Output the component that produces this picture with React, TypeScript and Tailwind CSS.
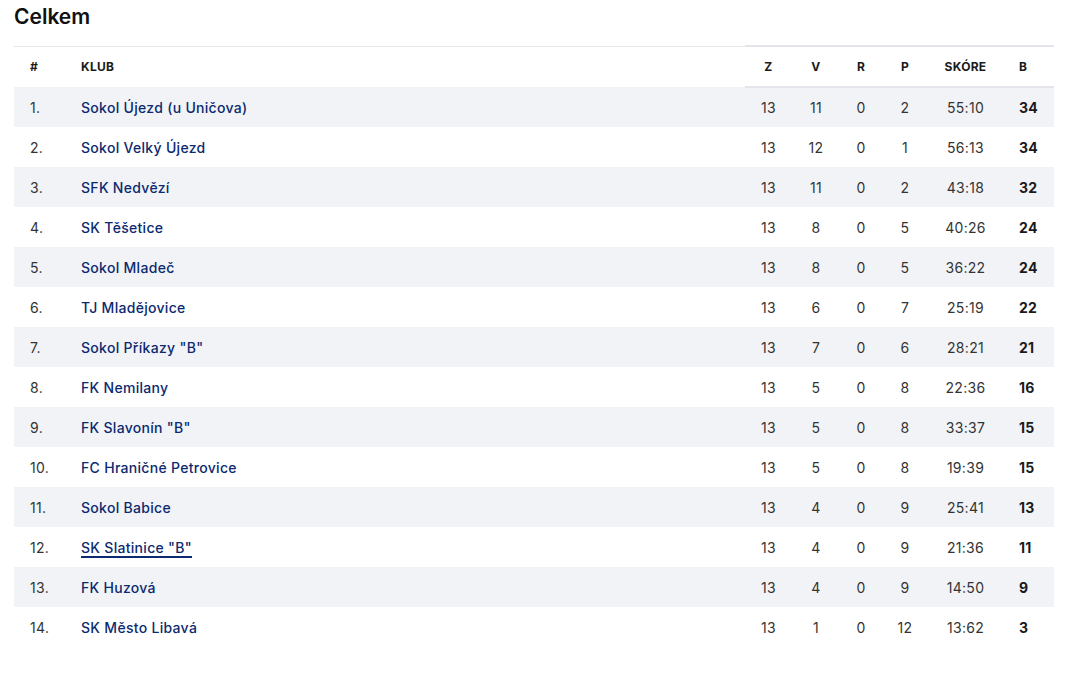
const rows: [string, number, number, number, number, string, number][] = [
  ["Sokol Újezd (u Uničova)", 13, 11, 0, 2, "55:10", 34],
  ["Sokol Velký Újezd", 13, 12, 0, 1, "56:13", 34],
  ["SFK Nedvězí", 13, 11, 0, 2, "43:18", 32],
  ["SK Těšetice", 13, 8, 0, 5, "40:26", 24],
  ["Sokol Mladeč", 13, 8, 0, 5, "36:22", 24],
  ["TJ Mladějovice", 13, 6, 0, 7, "25:19", 22],
  ["Sokol Příkazy \"B\"", 13, 7, 0, 6, "28:21", 21],
  ["FK Nemilany", 13, 5, 0, 8, "22:36", 16],
  ["FK Slavonín \"B\"", 13, 5, 0, 8, "33:37", 15],
  ["FC Hraničné Petrovice", 13, 5, 0, 8, "19:39", 15],
  ["Sokol Babice", 13, 4, 0, 9, "25:41", 13],
  ["SK Slatinice \"B\"", 13, 4, 0, 9, "21:36", 11],
  ["FK Huzová", 13, 4, 0, 9, "14:50", 9],
  ["SK Město Libavá", 13, 1, 0, 12, "13:62", 3],
];

export default function App() {
  return (
    <div className="min-h-[679px] bg-white px-[14px] pt-[3px] text-[#222] font-['Inter','Noto_Sans',sans-serif]">
      <h2 className="mb-[14px] h-[28px] text-[21px] font-semibold leading-[28px] text-[#111]">Celkem</h2>
      <table className="w-[1040px] table-fixed border-collapse text-[14px] tracking-[0.3px]">
        <colgroup>
          <col className="w-[53px]" />
          <col className="w-[678px]" />
          <col className="w-[47px]" />
          <col className="w-[48px]" />
          <col className="w-[42px]" />
          <col className="w-[46px]" />
          <col className="w-[75px]" />
          <col className="w-[51px]" />
        </colgroup>
        <thead>
          <tr className="h-[41px] border-t border-[#e6e7eb] text-[12px] font-bold text-[#1a1a1a]">
            <th className="pl-[16px] text-left">#</th>
            <th className="pl-[14px] text-left">KLUB</th>
            <th className="border-t-2 border-b-2 border-[#e4e5ea] text-center">Z</th>
            <th className="border-t-2 border-b-2 border-[#e4e5ea] text-center">V</th>
            <th className="border-t-2 border-b-2 border-[#e4e5ea] text-center">R</th>
            <th className="border-t-2 border-b-2 border-[#e4e5ea] text-center">P</th>
            <th className="border-t-2 border-b-2 border-[#e4e5ea] text-center">SKÓRE</th>
            <th className="border-t-2 border-b-2 border-[#e4e5ea] pl-[16px] text-left">B</th>
          </tr>
        </thead>
        <tbody>
          {rows.map(([name, z, v, r, p, score, b], i) => (
            <tr key={name} className={i % 2 === 0 ? "h-[40px] bg-[#f2f3f7]" : "h-[40px] bg-white"}>
              <td className="pl-[16px] text-[#333]">{i + 1}.</td>
              <td className="pl-[14px]">
                <span
                  className={
                    i === 11
                      ? "font-medium text-[#0b2a6f] underline decoration-[2px] underline-offset-[3px]"
                      : "font-medium text-[#0b2a6f]"
                  }
                >
                  {name}
                </span>
              </td>
              <td className="text-center text-[#333]">{z}</td>
              <td className="text-center text-[#333]">{v}</td>
              <td className="text-center text-[#333]">{r}</td>
              <td className="text-center text-[#333]">{p}</td>
              <td className="text-center text-[#333]">{score}</td>
              <td className="pl-[16px] text-left font-bold text-[#1a1a1a]">{b}</td>
            </tr>
          ))}
        </tbody>
      </table>
    </div>
  );
}
